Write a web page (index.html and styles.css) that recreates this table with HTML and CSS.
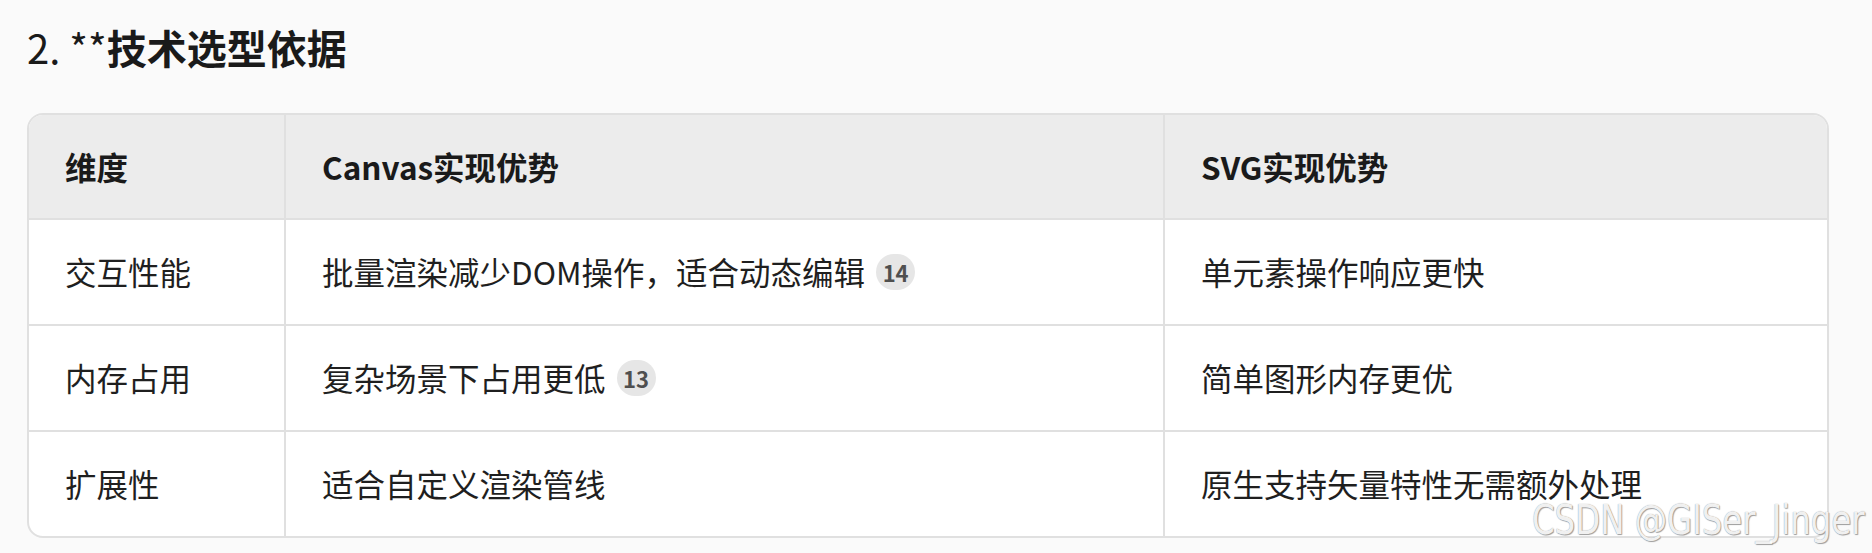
FILE: index.html
```html
<!DOCTYPE html>
<html lang="zh-CN">
<head>
<meta charset="utf-8">
<title>技术选型依据</title>
<link rel="stylesheet" href="styles.css">
</head>
<body>
<main class="page">
  <h2 class="heading">2. **<strong>技术选型依据</strong></h2>
  <div class="table-wrap">
    <table class="compare">
      <colgroup>
        <col class="col-dim">
        <col class="col-canvas">
        <col class="col-svg">
      </colgroup>
      <thead>
        <tr>
          <th>维度</th>
          <th>Canvas实现优势</th>
          <th>SVG实现优势</th>
        </tr>
      </thead>
      <tbody>
        <tr>
          <td>交互性能</td>
          <td>批量渲染减少DOM操作，适合动态编辑<span class="badge">14</span></td>
          <td>单元素操作响应更快</td>
        </tr>
        <tr>
          <td>内存占用</td>
          <td>复杂场景下占用更低<span class="badge">13</span></td>
          <td>简单图形内存更优</td>
        </tr>
        <tr>
          <td>扩展性</td>
          <td>适合自定义渲染管线</td>
          <td>原生支持矢量特性无需额外处理</td>
        </tr>
      </tbody>
    </table>
  </div>
  <div class="watermark">CSDN @GISer_Jinger</div>
</main>
</body>
</html>
```

FILE: styles.css
```css
html, body {
  margin: 0;
  padding: 0;
  background: #fafafa;
}

body {
  font-family: "Noto Sans CJK SC", "Noto Sans", sans-serif;
  color: #1f1f1f;
  overflow: hidden;
}

.page {
  position: relative;
  width: 1802px;
  height: 553px;
  padding: 0 43px 0 27px;
}

.heading {
  margin: 0;
  padding-top: 23px;
  font-size: 40px;
  line-height: 48px;
  font-weight: 400;
  color: #1a1a1a;
}

.heading strong {
  font-weight: 700;
}

.table-wrap {
  margin-top: 42px;
  width: 1802px;
  box-sizing: border-box;
  border: 2px solid #e0e0e0;
  border-radius: 16px;
  overflow: hidden;
  background: #ffffff;
}

.compare {
  width: 100%;
  border-collapse: separate;
  border-spacing: 0;
  table-layout: fixed;
  font-size: 31.5px;
}

.col-dim { width: 255px; }
.col-canvas { width: 879px; }

.compare th,
.compare td {
  box-sizing: border-box;
  text-align: left;
  padding: 28px 36px 29px;
  line-height: 47px;
  white-space: nowrap;
}

.compare th {
  background: #ececec;
  font-weight: 700;
  padding-top: 28px;
  padding-bottom: 28px;
  color: #1a1a1a;
}

.compare td {
  font-weight: 400;
  border-top: 2px solid #e0e0e0;
}

.compare th + th,
.compare td + td {
  border-left: 2px solid #e0e0e0;
}

.badge {
  display: inline-block;
  margin-left: 11px;
  min-width: 39px;
  height: 36px;
  padding: 0 6px;
  box-sizing: border-box;
  border-radius: 18px;
  background: #e6e6e6;
  color: #4f4f4f;
  font-size: 22px;
  font-weight: 700;
  line-height: 36px;
  text-align: center;
  vertical-align: 3px;
}

.watermark {
  position: absolute;
  left: 1532px;
  top: 496px;
  font-family: "Liberation Sans Narrow", "DejaVu Sans Condensed", "Liberation Sans", sans-serif;
  font-size: 40px;
  line-height: 48px;
  white-space: nowrap;
  color: rgba(255, 255, 255, 0.9);
  text-shadow: 0 0 1px #8a8a8a, 1px 1px 1px #a0a0a0;
  transform: scaleX(0.9);
  transform-origin: left center;
}
```
